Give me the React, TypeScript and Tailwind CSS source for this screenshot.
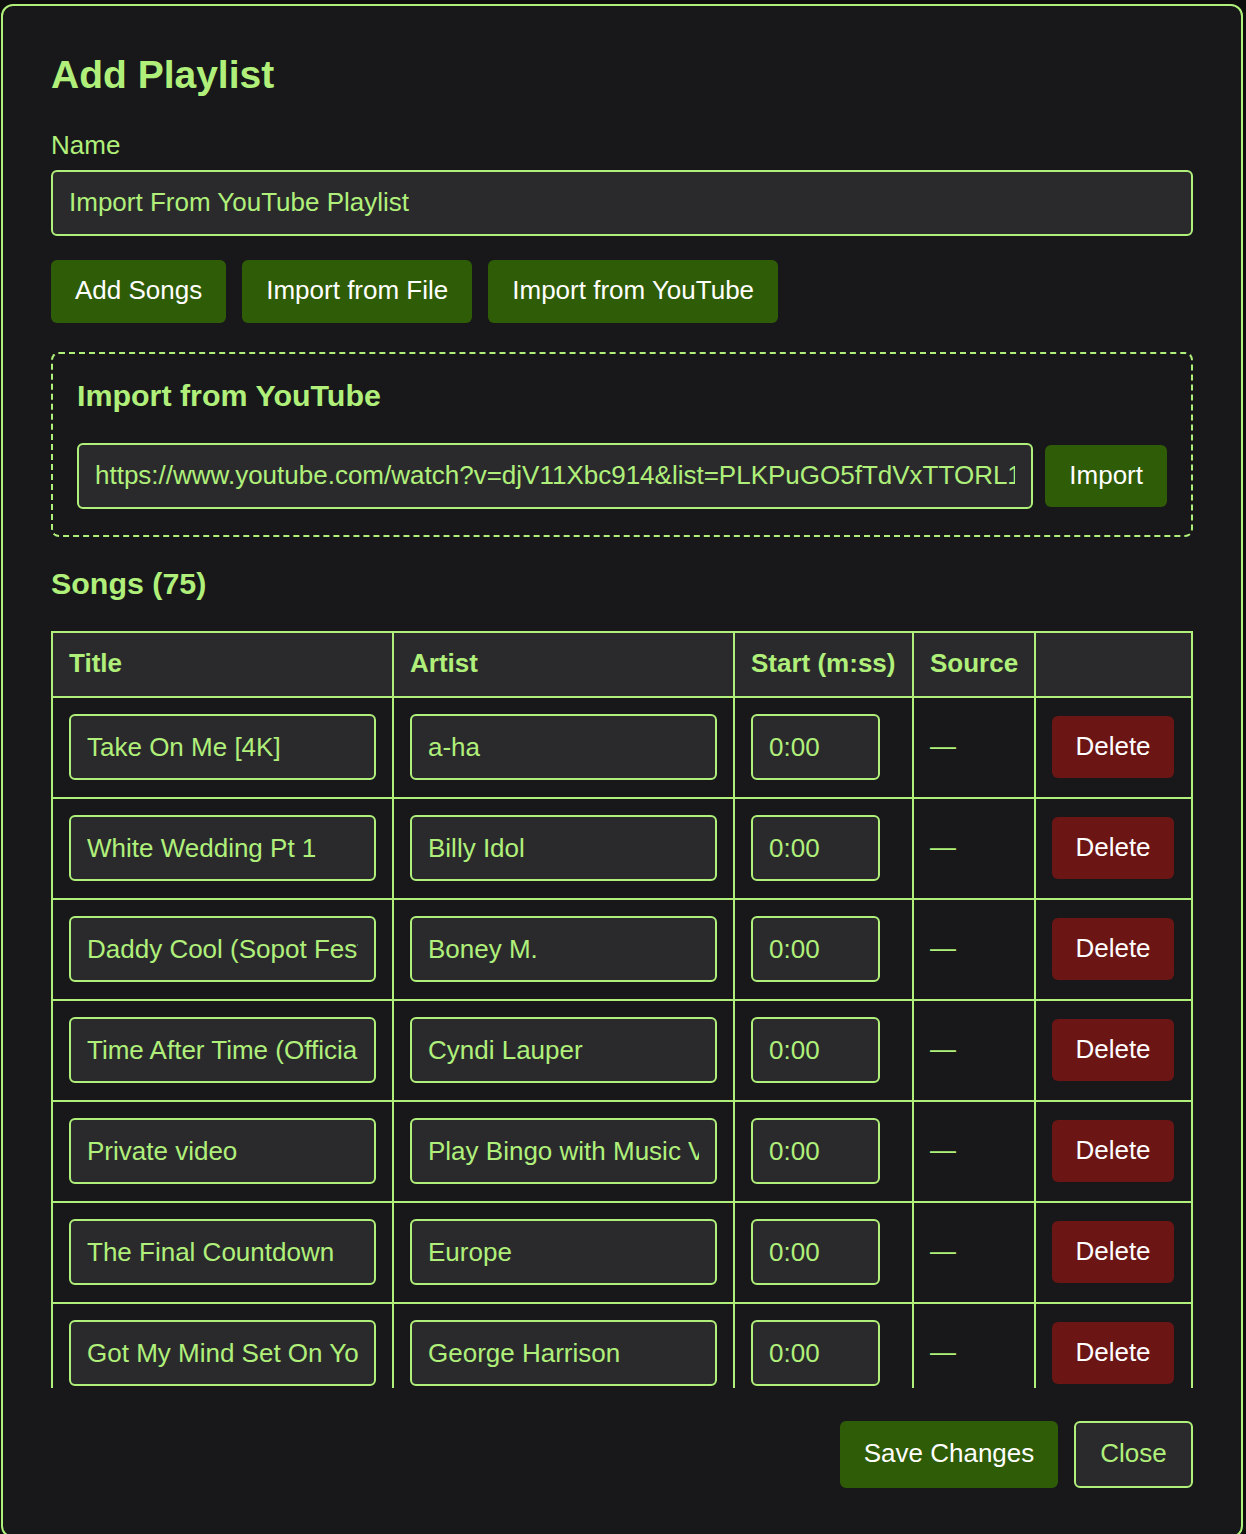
import React from "react";

const songs = [
  { title: "Take On Me [4K]", artist: "a-ha" },
  { title: "White Wedding Pt 1", artist: "Billy Idol" },
  { title: "Daddy Cool (Sopot Festival 1977)", artist: "Boney M." },
  { title: "Time After Time (Official Video)", artist: "Cyndi Lauper" },
  { title: "Private video", artist: "Play Bingo with Music Videos" },
  { title: "The Final Countdown", artist: "Europe" },
  { title: "Got My Mind Set On You", artist: "George Harrison" },
  { title: "Don't You (Forget About Me)", artist: "Simple Minds" },
];

const inputCls =
  "block h-[66px] rounded-[6px] border-2 border-[#b0f07a] bg-[#2a2a2d] px-[16px] text-[26px] leading-[1.15] text-[#b0f07a] outline-none";

const btnCls =
  "flex items-center justify-center rounded-[6px] text-[26px] leading-[1.15] whitespace-nowrap";

export default function App() {
  return (
    <div
      className="min-h-screen bg-[#0e0e0f] pt-[4px] pl-[1px]"
      style={{ fontFamily: '"Liberation Sans", Arial, Helvetica, sans-serif' }}
    >
      <div className="w-[1242px] rounded-[12px] border-2 border-[#b0f07a] bg-[#18181a] px-[48px] pt-[47px] pb-[48px] text-[#b0f07a]">
        <h2 className="text-[39px] font-bold leading-[1.15]">Add Playlist</h2>

        <label className="mt-[33px] block text-[26px] leading-[1.15]">Name</label>
        <input
          className={inputCls + " mt-[9px] w-full"}
          defaultValue="Import From YouTube Playlist"
        />

        <div className="mt-[24px] flex gap-[16px]">
          {["Add Songs", "Import from File", "Import from YouTube"].map((b) => (
            <button key={b} className={btnCls + " h-[63px] bg-[#2f5c06] px-[24px] text-white"}>
              {b}
            </button>
          ))}
        </div>

        <div className="mt-[29px] rounded-[8px] border-2 border-dashed border-[#b0f07a] px-[24px] pt-[24px] pb-[26px]">
          <h3 className="text-[30.4px] font-bold leading-[1.15]">Import from YouTube</h3>
          <div className="mt-[30px] flex items-center gap-[12px]">
            <input
              className={inputCls + " min-w-0 flex-1"}
              defaultValue="https://www.youtube.com/watch?v=djV11Xbc914&list=PLKPuGO5fTdVxTTORL1jPlt2LLKE3NC5ZI"
            />
            <button className={btnCls + " h-[62px] bg-[#2f5c06] px-[24px] text-white"}>Import</button>
          </div>
        </div>

        <h3 className="mt-[29px] text-[30.4px] font-bold leading-[1.15]">Songs (75)</h3>

        <div className="mt-[30px] h-[757px] overflow-hidden">
          <div className="grid grid-cols-[341px_341px_179px_122px_157px] border-t-2 border-l-2 border-[#b0f07a]">
            {["Title", "Artist", "Start (m:ss)", "Source", ""].map((h, i) => (
              <div
                key={i}
                className="flex h-[65px] items-center whitespace-nowrap border-r-2 border-b-2 border-[#b0f07a] bg-[#2a2a2c] px-[16px] text-[26px] font-bold leading-[1.15]"
              >
                {h}
              </div>
            ))}
            {songs.map((s, i) => (
              <React.Fragment key={i}>
                <div className="flex h-[101px] items-center border-r-2 border-b-2 border-[#b0f07a] px-[16px]">
                  <input className={inputCls + " w-full"} defaultValue={s.title} />
                </div>
                <div className="flex h-[101px] items-center border-r-2 border-b-2 border-[#b0f07a] px-[16px]">
                  <input className={inputCls + " w-full"} defaultValue={s.artist} />
                </div>
                <div className="flex h-[101px] items-center border-r-2 border-b-2 border-[#b0f07a] px-[16px]">
                  <input className={inputCls + " w-[129px]"} defaultValue="0:00" />
                </div>
                <div className="flex h-[101px] items-center border-r-2 border-b-2 border-[#b0f07a] px-[16px] text-[26px] leading-[1.15]">
                  —
                </div>
                <div className="flex h-[101px] items-center border-r-2 border-b-2 border-[#b0f07a] px-[16px]">
                  <button className={btnCls + " h-[62px] w-[122px] bg-[#6c1515] text-white"}>
                    Delete
                  </button>
                </div>
              </React.Fragment>
            ))}
          </div>
        </div>

        <div className="mt-[33px] flex justify-end gap-[16px]">
          <button className={btnCls + " h-[67px] w-[218px] border-2 border-[#2f5c06] bg-[#2f5c06] text-white"}>
            Save Changes
          </button>
          <button className={btnCls + " h-[67px] w-[119px] border-2 border-[#b0f07a] bg-[#2a2a2d] text-[#b0f07a]"}>
            Close
          </button>
        </div>
      </div>
    </div>
  );
}
